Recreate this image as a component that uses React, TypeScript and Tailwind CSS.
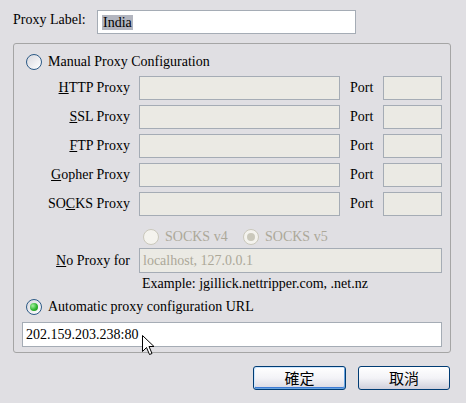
import React from "react";

type RadioProps = { checked?: boolean; disabled?: boolean };

const Radio: React.FC<RadioProps> = ({ checked, disabled }) => (
  <span
    className={
      disabled
        ? "flex h-[16px] w-[16px] shrink-0 items-center justify-center rounded-full border border-[#cac8bb] bg-[#f4f3ee]"
        : "flex h-[16px] w-[16px] shrink-0 items-center justify-center rounded-full border border-[#2c5a86] bg-linear-to-br from-[#d9d9df] to-white"
    }
  >
    {checked && (
      <span
        className={
          disabled
            ? "h-[8px] w-[8px] rounded-full bg-[#cac8bb]"
            : "h-[8px] w-[8px] rounded-full bg-[radial-gradient(circle_at_35%_35%,#a6f2a0,#2fb52f_55%,#168a16)]"
        }
      />
    )}
  </span>
);

type FieldProps = { className: string; value?: string; disabled?: boolean };

const Field: React.FC<FieldProps> = ({ className, value, disabled }) => (
  <div
    className={`${className} flex shrink-0 items-center border border-[#a5acb5] px-[3px] ${
      disabled ? "bg-[#ebeae4] text-[#aca899]" : "bg-white text-black"
    }`}
  >
    {value}
  </div>
);

const ProxyRow: React.FC<{ label: React.ReactNode }> = ({ label }) => (
  <div className="flex h-[24px] items-center">
    <span className="w-[116px] shrink-0 text-right">{label}</span>
    <Field className="ml-[9px] h-[24px] w-[201px]" disabled />
    <span className="w-[43px] shrink-0 pl-[10px]">Port</span>
    <Field className="h-[24px] w-[59px]" disabled />
  </div>
);

const Cursor = () => (
  <svg
    className="absolute left-[142px] top-[335px]"
    width="13"
    height="22"
    viewBox="0 0 13 22"
  >
    <path
      d="M0.5 0.5 L0.5 16.5 L4.5 12.5 L7.5 19.5 L10 18.5 L7 11.5 L12 11.5 Z"
      fill="white"
      stroke="black"
      strokeWidth="1"
      strokeLinejoin="miter"
    />
  </svg>
);

export default function App() {
  return (
    <div className="relative h-[403px] w-[466px] overflow-hidden bg-[#e0dfe3] font-['Liberation_Serif',serif] text-[14px] leading-[16px] text-black">
      {/* label field */}
      <div className="flex items-start pl-[13px] pt-[10px]">
        <span className="w-[84px] shrink-0 pt-[2px]">Proxy Label:</span>
        <div className="flex h-[24px] w-[259px] items-center border border-[#a5acb5] bg-white px-[4px]">
          <span className="bg-[#b2b5bf] px-[1px] leading-[15px]">India</span>
        </div>
      </div>

      {/* proxy settings group */}
      <div className="ml-[13px] mt-[9px] h-[310px] w-[438px] rounded-[3px] border border-[#a5a5a5] pt-[10px]">
        <div className="flex h-[16px] items-center gap-[6px] pl-[12px]">
          <Radio />
          <span>Manual Proxy Configuration</span>
        </div>

        <div className="mt-[6px] flex flex-col gap-[5px]">
          <ProxyRow label={<><u>H</u>TTP Proxy</>} />
          <ProxyRow label={<><u>S</u>SL Proxy</>} />
          <ProxyRow label={<><u>F</u>TP Proxy</>} />
          <ProxyRow label={<><u>G</u>opher Proxy</>} />
          <ProxyRow label={<>SO<u>C</u>KS Proxy</>} />
        </div>

        <div className="mt-[13px] flex h-[16px] items-center pl-[129px] text-[#aca899]">
          <div className="flex w-[100px] items-center gap-[6px]">
            <Radio disabled />
            <span>SOCKS v4</span>
          </div>
          <div className="flex items-center gap-[6px]">
            <Radio disabled checked />
            <span>SOCKS v5</span>
          </div>
        </div>

        <div className="mt-[3px] flex h-[25px] items-center">
          <span className="w-[116px] shrink-0 text-right">
            <u>N</u>o Proxy for
          </span>
          <Field
            className="ml-[9px] h-[25px] w-[303px]"
            value="localhost, 127.0.0.1"
            disabled
          />
        </div>

        <div className="mt-[3px] h-[16px] pl-[128px]">
          Example: jgillick.nettripper.com, .net.nz
        </div>

        <div className="mt-[7px] flex h-[16px] items-center gap-[6px] pl-[12px]">
          <Radio checked />
          <span>Automatic proxy configuration URL</span>
        </div>

        <Field
          className="ml-[8px] mt-[7px] h-[25px] w-[420px]"
          value="202.159.203.238:80"
        />
      </div>

      {/* dialog buttons */}
      <div className="mt-[13px] flex gap-[12px] pl-[253px] font-['Noto_Sans_CJK_TC',sans-serif] text-[15px]">
        <button className="h-[24px] w-[93px] rounded-[3px] border border-[#003c74] bg-linear-to-b from-white via-[#f3f3f7] to-[#d8d8e2] shadow-[inset_1px_1px_0_#cee7ff,inset_-1px_-1px_0_#69a4e0,inset_0_-2px_0_#3d7bd5]">
          確定
        </button>
        <button className="h-[24px] w-[92px] rounded-[3px] border border-[#003c74] bg-linear-to-b from-white via-[#f3f3f7] to-[#d0d0dc]">
          取消
        </button>
      </div>

      <Cursor />
    </div>
  );
}
